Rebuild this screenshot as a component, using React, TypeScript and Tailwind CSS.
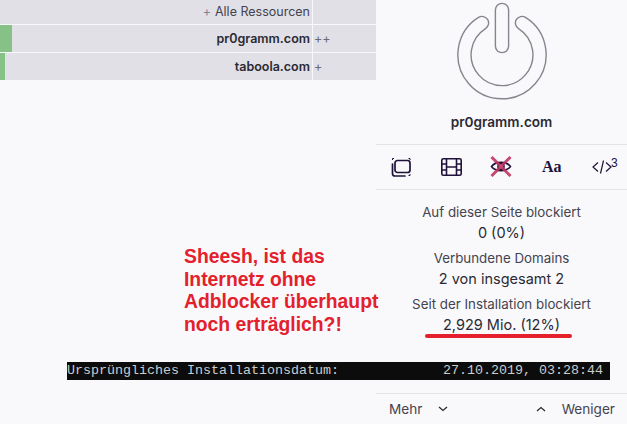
const SANS = "font-['Inter',sans-serif]";

function ResourceRow({ name, bar, count }: { name: string; bar: number; count: string }) {
  return (
    <div className="flex h-[27px] bg-[#e0e0e6]">
      <div className="flex w-[313px] items-center justify-end border-r border-[#f9f9fb] pr-[2px]">
        <div className="mr-auto h-full bg-[#86c186]" style={{ width: bar }} />
        <span className="pt-px text-[12.5px] font-semibold text-[#2b2a33]">{name}</span>
      </div>
      <span className="ml-[1px] flex items-center pt-px text-[12.5px] text-[#6b6b75]">{count}</span>
    </div>
  );
}

function PowerIcon() {
  return (
    <svg width="92" height="100" viewBox="0 0 92 100" fill="none" strokeLinecap="round">
      <g stroke="#85858f" strokeWidth="14.6">
        <path d="M26 23 A37.5 37.5 0 1 0 66 23" />
        <path d="M46 10 V46" />
      </g>
      <g stroke="#f9f9fb" strokeWidth="11.8">
        <path d="M26 23 A37.5 37.5 0 1 0 66 23" />
        <path d="M46 10 V46" />
      </g>
    </svg>
  );
}

function FramesIcon() {
  return (
    <svg width="22" height="22" viewBox="0 0 22 22" fill="none" stroke="#20123a">
      <path d="M2.5 2.5 H4 M2.5 2.5 V4 M18.5 2.5 H20 M20 2.5 V4 M20 18 V19.5 M18.5 19.5 H20" strokeWidth="1" />
      <rect x="5" y="4.5" width="15" height="12" rx="2.5" strokeWidth="1.7" />
      <path d="M2.5 8 V17.5 a2.5 2.5 0 0 0 2.5 2.5 H15" strokeWidth="1.7" strokeLinecap="round" />
    </svg>
  );
}

function FilmIcon() {
  return (
    <svg width="21" height="18" viewBox="0 0 21 18" fill="none" stroke="#20123a" strokeWidth="1.6">
      <rect x="0.8" y="0.8" width="19.4" height="16.4" rx="1.5" />
      <path d="M5.5 0.8 V17.2 M15.5 0.8 V17.2 M0.8 6 H5.5 M0.8 12 H5.5 M15.5 6 H20.2 M15.5 12 H20.2 M5.5 9 H15.5" />
    </svg>
  );
}

function BlockedEyeIcon() {
  return (
    <svg width="22" height="21" viewBox="0 0 22 21" fill="none">
      <path d="M1.5 10.5 C5.5 5 16.5 5 20.5 10.5 C16.5 16 5.5 16 1.5 10.5 Z" stroke="#20123a" strokeWidth="1.6" />
      <circle cx="11" cy="10.5" r="3" stroke="#20123a" strokeWidth="1.6" />
      <path d="M1.5 1 L20.5 20 M20.5 1 L1.5 20" stroke="#c0355f" strokeWidth="3" strokeOpacity="0.9" />
    </svg>
  );
}

function CodeIcon() {
  return (
    <svg width="20" height="14" viewBox="0 0 20 14" fill="none" stroke="#20123a" strokeWidth="1.2">
      <path d="M6 2.5 L1 7 L6 11.5 M14 2.5 L19 7 L14 11.5 M11.5 0.5 L8.5 13.5" />
    </svg>
  );
}

function Chevron({ up }: { up?: boolean }) {
  return (
    <svg width="10" height="6" viewBox="0 0 10 6" fill="none" stroke="#2b2a33" strokeWidth="1.3">
      <path d={up ? "M1 5 L5 1.5 L9 5" : "M1 1 L5 4.5 L9 1"} />
    </svg>
  );
}

function Stat({ label, value }: { label: string; value: string }) {
  return (
    <div className="flex flex-col items-center">
      <span className="text-[13.33px] leading-[20px] text-[#45434f]">{label}</span>
      <span className="text-[14.5px] leading-[21px] text-[#2b2a33]">{value}</span>
    </div>
  );
}

export default function App() {
  return (
    <div className={`relative flex h-[424px] w-[627px] overflow-hidden bg-[#f9f9fb] ${SANS}`}>
      <div className="flex w-[376px] flex-col gap-px">
        <div className="flex h-[24px] bg-[#e0e0e6]">
          <div className="flex w-[313px] items-center justify-end gap-1 border-r border-[#f9f9fb] pr-[2px] text-[12.5px] text-[#45434f]">
            <span className="text-[#85858f]">+</span>
            <span>Alle Ressourcen</span>
          </div>
        </div>
        <ResourceRow name="pr0gramm.com" bar={12} count="++" />
        <ResourceRow name="taboola.com" bar={5} count="+" />
      </div>

      <div className="flex w-[251px] flex-col">
        <div className="flex h-[144px] flex-col items-center">
          <PowerIcon />
          <span className="mt-[12px] text-[13.6px] font-semibold text-[#2b2a33]">pr0gramm.com</span>
        </div>
        <div className="grid h-[46px] grid-cols-5 items-center justify-items-center border-y border-[#e4e4e8] pb-px">
          <FramesIcon />
          <FilmIcon />
          <BlockedEyeIcon />
          <span className="font-['Liberation_Serif',serif] text-[16px] font-bold text-[#20123a]">Aa</span>
          <span className="relative flex">
            <CodeIcon />
            <span className="absolute left-[19px] top-[-6px] font-['Liberation_Sans',sans-serif] text-[12px] text-[#20123a]">3</span>
          </span>
        </div>
        <div className="flex flex-col gap-[5px] pt-[12px]">
          <Stat label="Auf dieser Seite blockiert" value="0 (0%)" />
          <Stat label="Verbundene Domains" value="2 von insgesamt 2" />
          <Stat label="Seit der Installation blockiert" value="2,929 Mio. (12%)" />
        </div>
        <div className="mt-auto flex h-[31px] items-center justify-between border-t border-[#e4e4e8] pl-[13px] pr-[12px] pt-px text-[13.6px] text-[#45434f]">
          <span className="flex items-center gap-[16px]">Mehr <Chevron /></span>
          <span className="flex items-center gap-[16px]"><Chevron up /> Weniger</span>
        </div>
      </div>

      {/* screenshot annotations */}
      <div className="absolute left-[184px] top-[246px] font-['Liberation_Sans',sans-serif] text-[19.33px] font-bold leading-[22.67px] text-[#e3202c]">
        Sheesh, ist das<br />Internetz ohne<br />Adblocker überhaupt<br />noch erträglich?!
      </div>
      <div className="absolute left-[425px] top-[334px] h-[4px] w-[147px] rounded-full bg-[#e3202c]" />
      <div className="absolute left-[67px] top-[362px] flex h-[18px] w-[543px] items-center justify-between pr-[7px] font-['Liberation_Mono',monospace] text-[13.33px] text-[#cccccc] bg-[#0c0c0c]">
        <span>Ursprüngliches Installationsdatum:</span>
        <span>27.10.2019, 03:28:44</span>
      </div>
    </div>
  );
}
